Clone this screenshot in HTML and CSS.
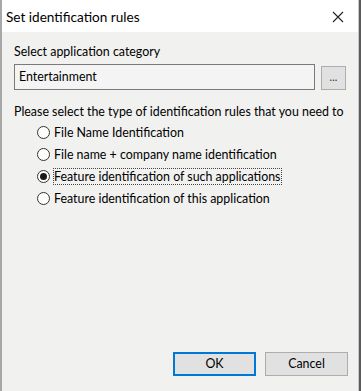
FILE: index.html
```html
<!DOCTYPE html>
<html>
<head>
<meta charset="utf-8">
<link rel="stylesheet" href="styles.css">
</head>
<body>
<div class="window">
  <div class="titlebar">
    <span class="title">Set identification rules</span>
    <svg class="close" width="12" height="12" viewBox="0 0 12 12"><path d="M1 1 L11 11 M11 1 L1 11" stroke="#222" stroke-width="1.1" fill="none"/></svg>
  </div>
  <div class="content">
    <div class="label">Select application category</div>
    <div class="catrow">
      <div class="textbox">Entertainment</div>
      <div class="browse">...</div>
    </div>
    <div class="prompt">Please select the type of identification rules that you need to</div>
    <div class="options">
      <div class="option"><span class="radio"></span><span class="otext">File Name Identification</span></div>
      <div class="option"><span class="radio"></span><span class="otext">File name + company name identification</span></div>
      <div class="option"><span class="radio checked"></span><span class="otext focus">Feature identification of such applications</span></div>
      <div class="option"><span class="radio"></span><span class="otext">Feature identification of this application</span></div>
    </div>
    <div class="spacer"></div>
    <div class="buttons">
      <div class="btn default">OK</div>
      <div class="btn">Cancel</div>
    </div>
  </div>
</div>
</body>
</html>
```
FILE: styles.css
```css
html, body {
  margin: 0;
  padding: 0;
  background: #5a5a5a;
}
body {
  font-family: Lato, "Liberation Sans", sans-serif;
  font-size: 12.4px;
  color: #000;
}
.window {
  width: 356px;
  height: 391px;
  border-left: 2px solid #a8a8a8;
  border-right: 1px solid #c9c9c9;
  display: flex;
  flex-direction: column;
  box-sizing: content-box;
}
.titlebar {
  height: 32px;
  background: #fff;
  display: flex;
  align-items: center;
  justify-content: space-between;
  padding: 0 14px 0 4px;
  flex-shrink: 0;
}
.title {
  font-size: 13.6px;
  padding-top: 1px;
}
.close {
  display: block;
  margin-top: 1px;
}
.content {
  flex: 1;
  background: #f1f1f0;
  padding: 0 12px 0 12px;
  display: flex;
  flex-direction: column;
}
.label {
  margin-top: 12px;
  line-height: 16px;
}
.catrow {
  margin-top: 4px;
  display: flex;
  align-items: flex-end;
  gap: 6px;
}
.textbox {
  flex: 1;
  height: 24px;
  border: 1px solid #7a7a7a;
  background: #f4f4f4;
  line-height: 24px;
  padding-left: 4px;
}
.browse {
  width: 23px;
  height: 22px;
  border: 1px solid #adadad;
  background: #e1e1e1;
  text-align: center;
  line-height: 19px;
  font-size: 11px;
  color: #333;
}
.prompt {
  margin-top: 14px;
  line-height: 16px;
}
.options {
  margin-top: 4px;
  margin-left: 23px;
  display: flex;
  flex-direction: column;
  gap: 5px;
}
.option {
  display: flex;
  align-items: center;
  height: 17px;
}
.radio {
  width: 11px;
  height: 11px;
  border: 1px solid #333;
  border-radius: 50%;
  background: #fff;
  position: relative;
  flex-shrink: 0;
  margin-right: 3px;
}
.radio.checked::after {
  content: "";
  position: absolute;
  left: 2px;
  top: 2px;
  width: 7px;
  height: 7px;
  border-radius: 50%;
  background: #1a1a1a;
}
.otext {
  line-height: 15px;
  padding: 0 1px 0 0;
  border: 1px dotted transparent;
}
.otext.focus {
  border-color: #444;
}
.spacer {
  flex: 1;
}
.buttons {
  display: flex;
  justify-content: flex-end;
  gap: 9px;
  margin-right: -2px;
  margin-bottom: 15px;
}
.btn {
  width: 81px;
  height: 22px;
  border: 1px solid #adadad;
  background: #e1e1e1;
  text-align: center;
  line-height: 22px;
}
.btn.default {
  border: 2px solid #0078d7;
  width: 79px;
  height: 20px;
  line-height: 20px;
}
```
